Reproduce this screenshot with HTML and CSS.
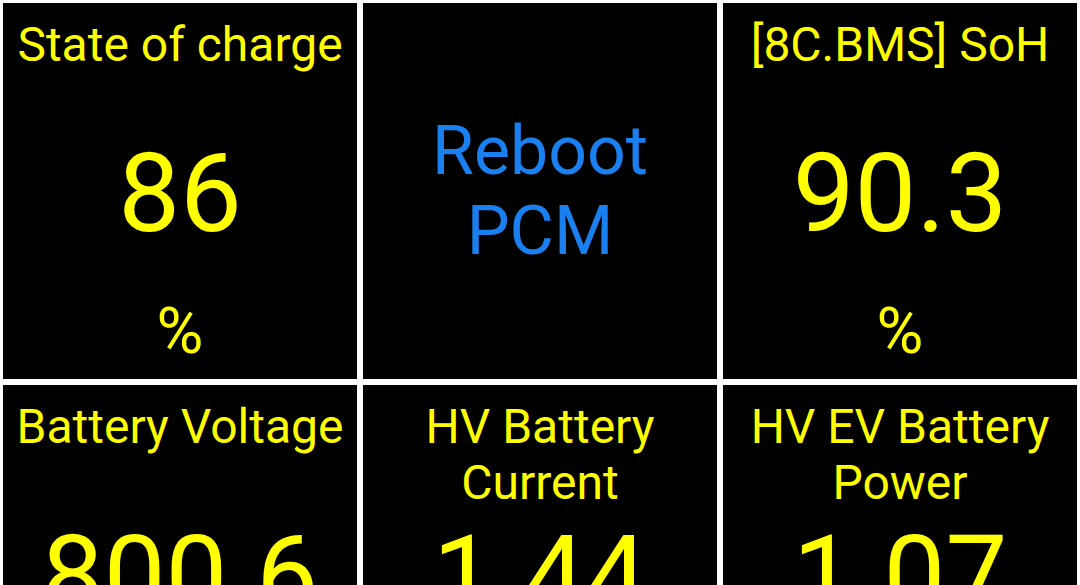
FILE: index.html
```html
<!DOCTYPE html>
<html>
<head>
<meta charset="utf-8">
<link rel="stylesheet" href="styles.css">
</head>
<body>
<div class="grid">
  <div class="tile">
    <div class="title">State of charge</div>
    <div class="value">86</div>
    <div class="unit">%</div>
  </div>
  <div class="tile action">
    <div class="label">Reboot<br>PCM</div>
  </div>
  <div class="tile">
    <div class="title">[8C.BMS] SoH</div>
    <div class="value">90.3</div>
    <div class="unit">%</div>
  </div>
  <div class="tile">
    <div class="title">Battery Voltage</div>
    <div class="value">800.6</div>
    <div class="unit">V</div>
  </div>
  <div class="tile">
    <div class="title">HV Battery Current</div>
    <div class="value">1.44</div>
    <div class="unit">A</div>
  </div>
  <div class="tile">
    <div class="title">HV EV Battery Power</div>
    <div class="value">1.07</div>
    <div class="unit">kW</div>
  </div>
</div>
</body>
</html>
```
FILE: styles.css
```css
html, body {
  margin: 0;
  padding: 0;
  background: #ffffff;
  overflow: hidden;
  height: 585px;
}
.grid {
  display: grid;
  grid-template-columns: repeat(3, 354px);
  grid-auto-rows: 376px;
  gap: 6px;
  padding: 3px;
}
.tile {
  background: #000000;
  color: #ffff00;
  font-family: Roboto, "Noto Sans", sans-serif;
  display: grid;
  grid-template-rows: 1fr auto 1fr;
  text-align: center;
  padding: 14px 2px 10px;
  box-sizing: border-box;
}
.title {
  font-size: 48px;
  line-height: 56px;
  align-self: start;
}
.value {
  font-size: 110px;
  line-height: 129px;
}
.unit {
  font-size: 64px;
  line-height: 75px;
  align-self: end;
}
.action {
  display: flex;
  align-items: center;
  justify-content: center;
  padding: 0;
}
.label {
  color: #1a80f0;
  font-size: 68px;
  line-height: 80px;
}
```
